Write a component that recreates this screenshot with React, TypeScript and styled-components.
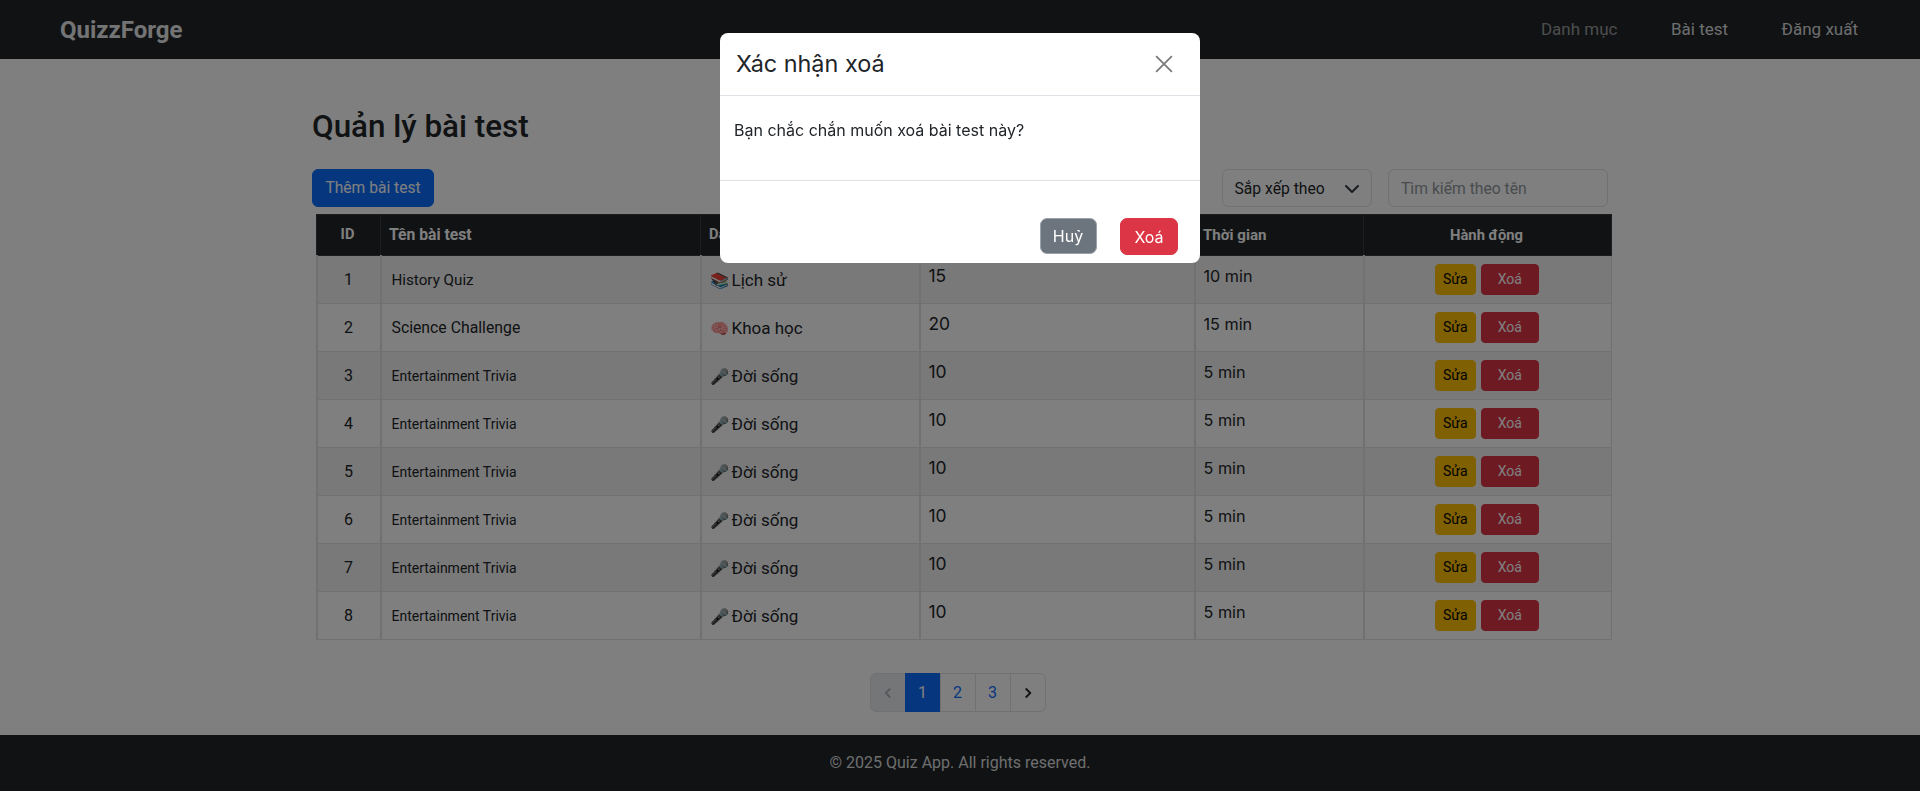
import React from "react";
import styled, { createGlobalStyle } from "styled-components";

const Global = createGlobalStyle`
  html, body { margin: 0; padding: 0; background: #fff; }
  body { font-family: Roboto, "Liberation Sans", sans-serif; font-size: 16px; color: #212529; line-height: 1.5; }
  * { box-sizing: border-box; }
`;
const Page = styled.div`
  min-height: 791px;
  display: flex;
  flex-direction: column;
`;
const NavBar = styled.nav`
  height: 59px;
  background: #212529;
  display: flex;
  align-items: center;
  justify-content: space-between;
  padding: 0 62px 0 60px;
`;
const Brand = styled.div`
  font-size: 24px;
  font-weight: 700;
  color: #fff;
  opacity: 0.9;
`;
const NavLinks = styled.div`
  display: flex;
  gap: 53.5px;
`;
const NavLink = styled.a<{ $muted?: boolean }>`
  font-size: 17px;
  color: ${(p) => (p.$muted ? "rgba(255,255,255,.55)" : "rgba(255,255,255,.85)")};
`;
const Main = styled.main`
  width: 1320px;
  margin: 0 auto;
  padding: 48px 12px 0;
  flex: 1;
`;
const Title = styled.h2`
  margin: 0 0 22px;
  font-size: 31.4px;
  font-weight: 500;
  line-height: 40px;
`;
const Toolbar = styled.div`
  display: flex;
  align-items: center;
  height: 38px;
  margin-bottom: 7px;
`;
const AddButton = styled.button`
  height: 38px;
  width: 122px;
  background: #0d6efd;
  color: #fff;
  border: 1px solid #0d6efd;
  border-radius: 6px;
  font: 400 15.6px Roboto, sans-serif;
  padding: 0;
`;
const Spacer = styled.div`
  flex: 1;
`;
const SortBox = styled.div`
  width: 150px;
  height: 38px;
  border: 1px solid #dee2e6;
  border-radius: 6px;
  display: flex;
  align-items: center;
  justify-content: space-between;
  padding: 1px 11px 0 11.5px;
  margin-right: 16px;
  font-size: 15.7px;
  color: #212529;
  background: #fff;
`;
const SearchBox = styled.input`
  width: 220px;
  height: 38px;
  border: 1px solid #dee2e6;
  border-radius: 6px;
  padding: 0 12px;
  font: 400 15.7px Roboto, sans-serif;
  background: #fff;
  &::placeholder { color: #6c757d; opacity: .75; }
`;
const TableWrap = styled.div`
  margin: 0 -3px 0 3.5px;
`;
const Table = styled.table`
  width: 1295px;
  table-layout: fixed;
  border-collapse: collapse;
  border: 1px solid #dee2e6;
`;
const Th = styled.th<{ $center?: boolean; $size?: number }>`
  height: 41px;
  background: #212529;
  color: #fff;
  font-size: ${(p) => p.$size ?? 14.6}px;
  font-weight: 700;
  padding: ${(p) => (p.$center ? "0 10px 0 8px" : "0 8px")};
  border: 1px solid #373b3e;
  text-align: ${(p) => (p.$center ? "center" : "left")};
`;
const Tr = styled.tr<{ $odd: boolean }>`
  height: 48px;
  background: ${(p) => (p.$odd ? "#f2f2f2" : "#fff")};
`;
const Td = styled.td<{ $center?: boolean }>`
  padding: 0 8px;
  border-left: 2px solid #dee2e6;
  border-bottom: 1px solid #dee2e6;
  text-align: ${(p) => (p.$center ? "center" : "left")};
`;
const CategoryCell = styled(Td)`
  padding-top: 2px;
`;
const Name = styled.span<{ $size: number }>`
  display: inline-block;
  padding-left: 2px;
  font-size: ${(p) => p.$size}px;
`;
const Emoji = styled.span`
  display: inline-block;
  width: 22px;
  font-size: 15.5px;
`;
const Category = styled.span`
  font-size: 17px;
`;
const Raised = styled.span<{ $size: number }>`
  position: relative;
  top: -3px;
  font-family: Inter, sans-serif;
  font-size: ${(p) => p.$size}px;
`;
const ActionRow = styled.div`
  display: flex;
  justify-content: center;
  align-items: center;
  gap: 5px;
  padding: 0 2px 1px 0;
`;
const SmallBtn = styled.button<{ $warn?: boolean }>`
  height: 31px;
  width: ${(p) => (p.$warn ? 41 : 58)}px;
  background: ${(p) => (p.$warn ? "#ffc107" : "#dc3545")};
  color: ${(p) => (p.$warn ? "#000" : "#fff")};
  border: 1px solid ${(p) => (p.$warn ? "#ffc107" : "#dc3545")};
  border-radius: 4px;
  font: 400 14px Roboto, sans-serif;
  padding: 0;
`;
const Pager = styled.div`
  display: flex;
  justify-content: center;
  margin-top: 33px;
  padding-right: 5px;
`;
const PageItem = styled.div<{ $active?: boolean; $disabled?: boolean; $w: number }>`
  width: ${(p) => p.$w}px;
  height: 39px;
  display: flex;
  align-items: center;
  justify-content: center;
  font-size: 16px;
  color: ${(p) => (p.$active ? "#fff" : p.$disabled ? "#adb5bd" : "#0d6efd")};
  background: ${(p) => (p.$active ? "#0d6efd" : p.$disabled ? "#e9ecef" : "#fff")};
  border: 1px solid ${(p) => (p.$active ? "#0d6efd" : "#dee2e6")};
  margin-left: -1px;
  &:first-child { border-radius: 6px 0 0 6px; margin-left: 0; }
  &:last-child { border-radius: 0 6px 6px 0; color: #212529; }
`;
const Footer = styled.footer`
  height: 56px;
  background: #212529;
  color: rgba(255,255,255,.85);
  display: flex;
  align-items: center;
  justify-content: center;
  font-size: 16px;
`;
const Backdrop = styled.div`
  position: fixed;
  inset: 0;
  background: rgba(0,0,0,.5);
`;
const Modal = styled.div`
  position: fixed;
  top: 33px;
  left: 720px;
  width: 480px;
  height: 230px;
  background: #fff;
  border-radius: 8px;
  font-family: Inter, sans-serif;
  display: flex;
  flex-direction: column;
`;
const ModalHeader = styled.div`
  height: 63px;
  border-bottom: 1px solid #dee2e6;
  display: flex;
  align-items: center;
  justify-content: space-between;
  padding: 0 27px 0 16px;
`;
const ModalTitle = styled.div`
  font-size: 23.4px;
  color: #212529;
`;
const ModalBody = styled.div`
  height: 85px;
  border-bottom: 1px solid #dee2e6;
  padding: 22px 14px 0;
  font-size: 16px;
  color: #212529;
`;
const ModalFooter = styled.div`
  flex: 1;
  display: flex;
  align-items: flex-start;
  justify-content: flex-end;
  gap: 23.5px;
  padding: 37px 22px 0;
`;
const ModalBtn = styled.button<{ $danger?: boolean }>`
  height: ${(p) => (p.$danger ? 37 : 36)}px;
  width: ${(p) => (p.$danger ? 58 : 57)}px;
  border-radius: 7px;
  background: ${(p) => (p.$danger ? "#dc3545" : "#6c757d")};
  border: 1px solid ${(p) => (p.$danger ? "#dc3545" : "#9aa1a9")};
  color: #fff;
  font: 400 16px Inter, sans-serif;
  padding: 0;
`;

const rows = [
  { id: 1, name: "History Quiz", size: 15.2, emoji: "📚", cat: "Lịch sử", q: 15, t: "10 min" },
  { id: 2, name: "Science Challenge", size: 15.8, emoji: "🧠", cat: "Khoa học", q: 20, t: "15 min" },
  ...[3, 4, 5, 6, 7, 8].map((id) => ({ id, name: "Entertainment Trivia", size: 14, emoji: "🎤", cat: "Đời sống", q: 10, t: "5 min" })),
];

export default function App() {
  return (
    <>
      <Global />
      <Page>
        <NavBar>
          <Brand>QuizzForge</Brand>
          <NavLinks>
            <NavLink $muted>Danh mục</NavLink>
            <NavLink>Bài test</NavLink>
            <NavLink>Đăng xuất</NavLink>
          </NavLinks>
        </NavBar>
        <Main>
          <Title>Quản lý bài test</Title>
          <Toolbar>
            <AddButton>Thêm bài test</AddButton>
            <Spacer />
            <SortBox>
              Sắp xếp theo
              <svg width="16" height="16" viewBox="0 0 16 16" fill="none" stroke="#343a40" strokeWidth="2" strokeLinecap="round" strokeLinejoin="round"><path d="M2 5l6 6 6-6" /></svg>
            </SortBox>
            <SearchBox placeholder="Tìm kiếm theo tên" />
          </Toolbar>
          <TableWrap>
            <Table>
              <colgroup>
                <col width="64" /><col width="320" /><col width="219" /><col width="275" /><col width="169" /><col width="248" />
              </colgroup>
              <thead>
                <tr>
                  <Th $center>ID</Th>
                  <Th $size={15.7}>Tên bài test</Th>
                  <Th>Danh mục</Th>
                  <Th>Số câu hỏi</Th>
                  <Th $size={15.1}>Thời gian</Th>
                  <Th $center $size={14.8}>Hành động</Th>
                </tr>
              </thead>
              <tbody>
                {rows.map((r) => (
                  <Tr key={r.id} $odd={r.id % 2 === 1}>
                    <Td $center>{r.id}</Td>
                    <Td><Name $size={r.size}>{r.name}</Name></Td>
                    <CategoryCell><Emoji>{r.emoji}</Emoji><Category>{r.cat}</Category></CategoryCell>
                    <Td><Raised $size={17.4}>{r.q}</Raised></Td>
                    <Td><Raised $size={16.2}>{r.t}</Raised></Td>
                    <Td>
                      <ActionRow>
                        <SmallBtn $warn>Sửa</SmallBtn>
                        <SmallBtn>Xoá</SmallBtn>
                      </ActionRow>
                    </Td>
                  </Tr>
                ))}
              </tbody>
            </Table>
          </TableWrap>
          <Pager>
            <PageItem $disabled $w={36}>
              <svg width="12" height="12" viewBox="0 0 16 16" fill="none" stroke="currentColor" strokeWidth="2.5"><path d="M11 2L5 8l6 6" /></svg>
            </PageItem>
            <PageItem $active $w={36}>1</PageItem>
            <PageItem $w={36}>2</PageItem>
            <PageItem $w={36}>3</PageItem>
            <PageItem $w={36}>
              <svg width="12" height="12" viewBox="0 0 16 16" fill="none" stroke="currentColor" strokeWidth="2.5"><path d="M5 2l6 6-6 6" /></svg>
            </PageItem>
          </Pager>
        </Main>
        <Footer>© 2025 Quiz App. All rights reserved.</Footer>
      </Page>
      <Backdrop />
      <Modal>
        <ModalHeader>
          <ModalTitle>Xác nhận xoá</ModalTitle>
          <svg width="18" height="18" viewBox="0 0 16 16" fill="none" stroke="#7b7b7b" strokeWidth="1.6"><path d="M1 1l14 14M15 1L1 15" /></svg>
        </ModalHeader>
        <ModalBody>Bạn chắc chắn muốn xoá bài test này?</ModalBody>
        <ModalFooter>
          <ModalBtn>Huỷ</ModalBtn>
          <ModalBtn $danger>Xoá</ModalBtn>
        </ModalFooter>
      </Modal>
    </>
  );
}
